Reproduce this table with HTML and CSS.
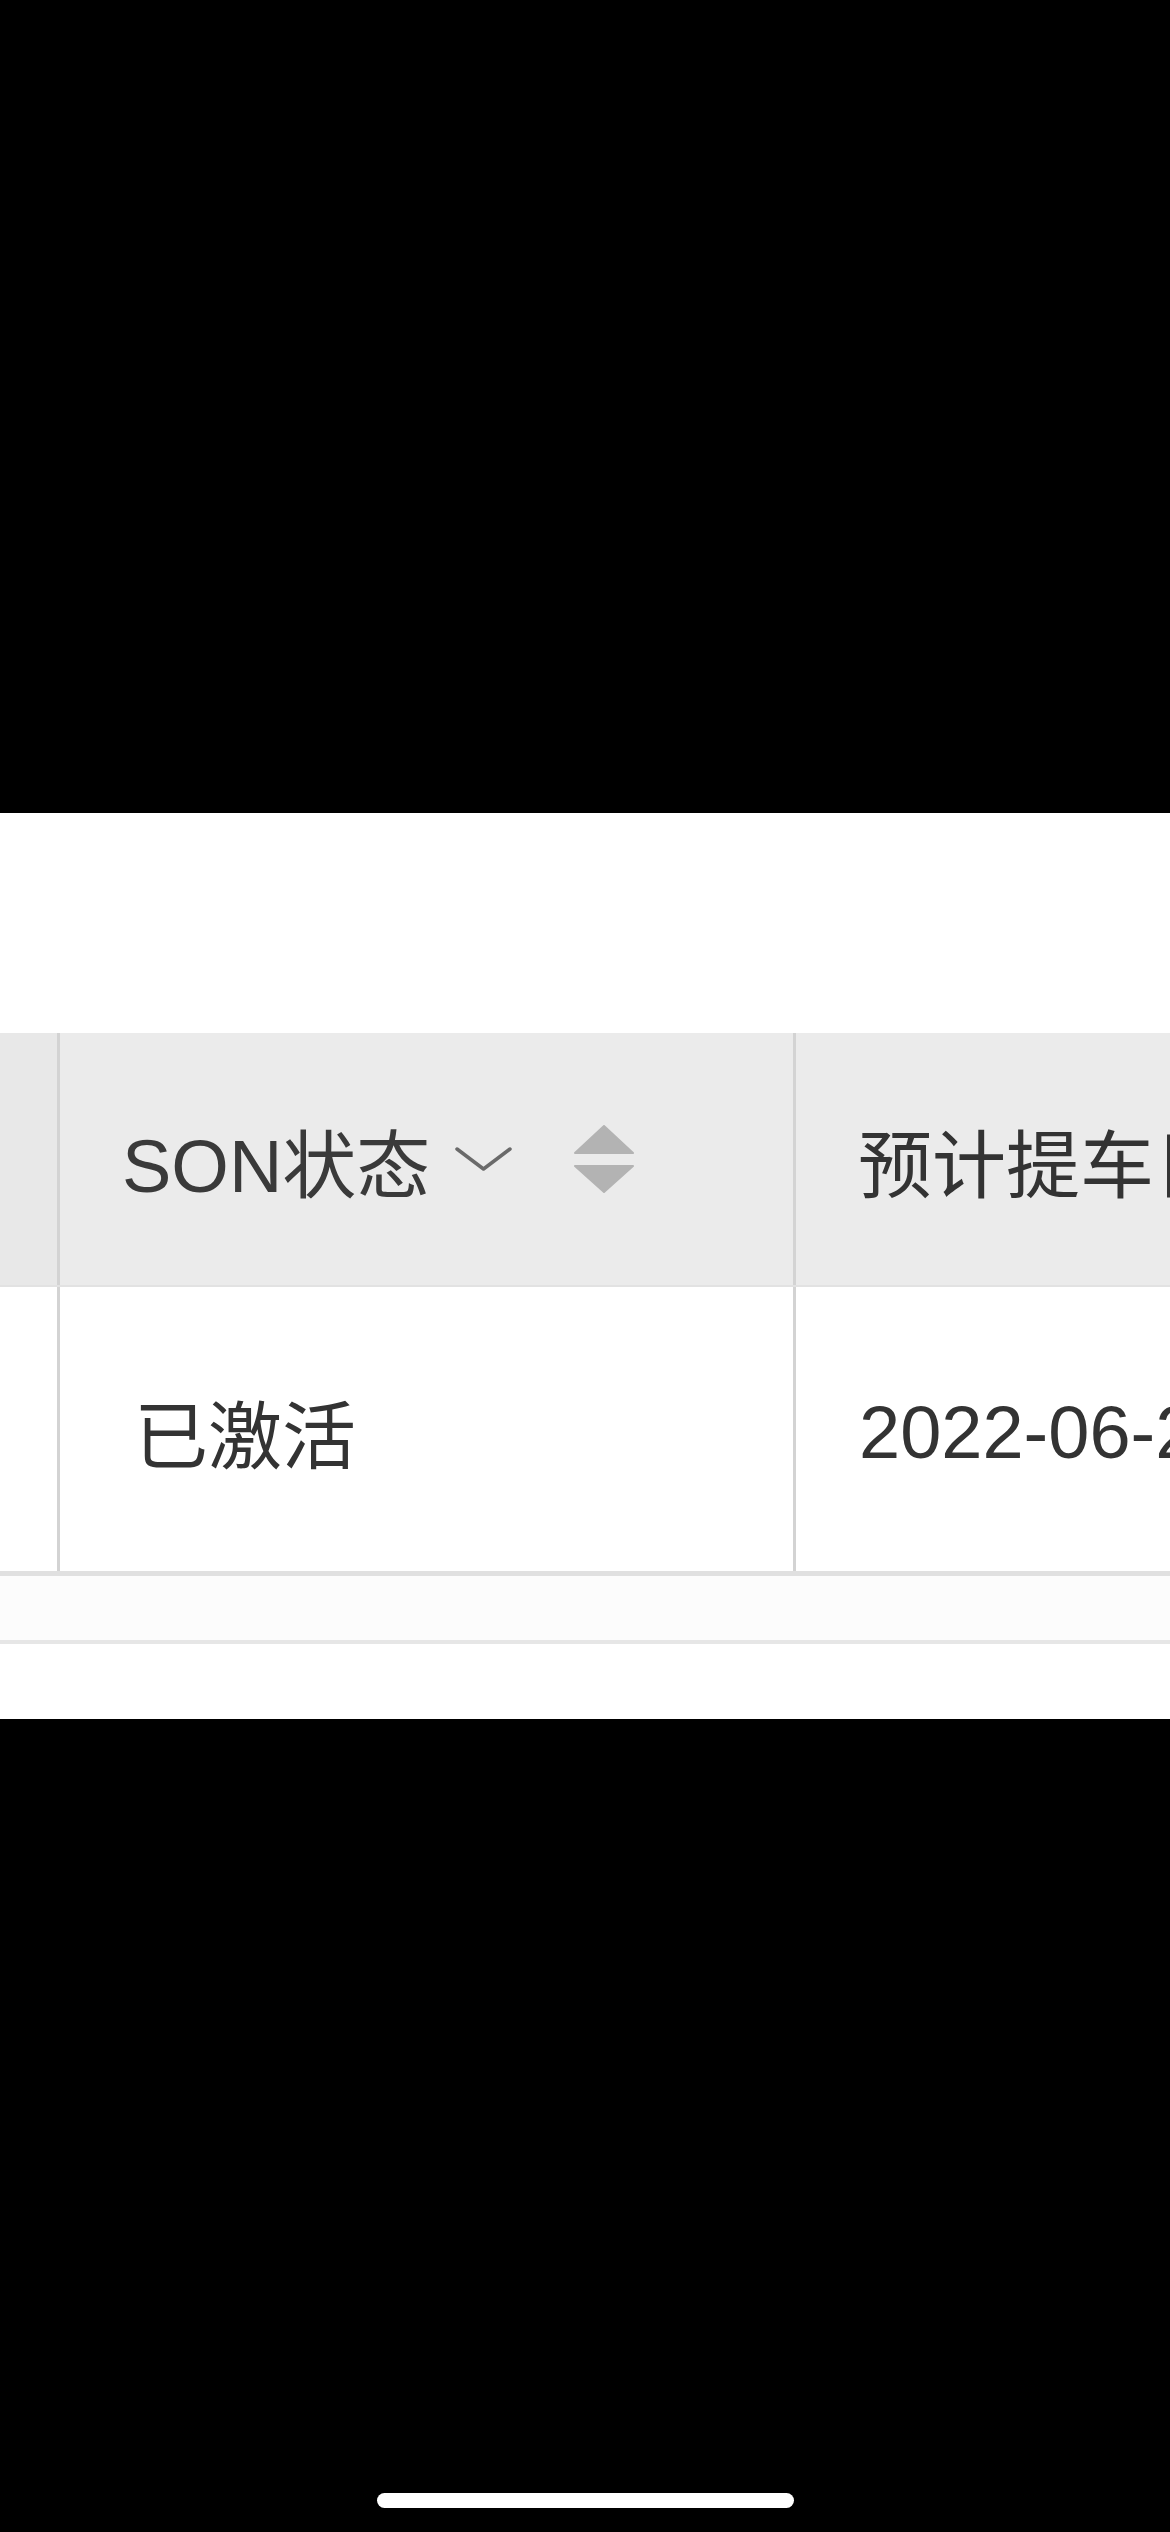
FILE: index.html
```html
<!DOCTYPE html>
<html lang="zh-CN">
<head>
<meta charset="utf-8">
<title>SON状态</title>
<link rel="stylesheet" href="styles.css">
</head>
<body>
<div class="screen">
  <div class="bezel-top"></div>
  <main class="sheet">
    <div class="table">
      <div class="row head">
        <div class="cell stub"></div>
        <div class="cell c1">
          <span class="label">SON状态</span>
          <svg class="chev" width="57" height="26" viewBox="0 0 57 26"><polyline points="2,3 28.5,23 55,3" fill="none" stroke="#6a6a6a" stroke-width="3.5" stroke-linejoin="round" stroke-linecap="round"/></svg>
          <svg class="sort" width="60" height="68" viewBox="0 0 60 68"><path d="M30 1 L59 28 L1 28 Z" fill="#b3b3b3" stroke="#b3b3b3" stroke-width="2" stroke-linejoin="round"/><path d="M1 41 L59 41 L30 67 Z" fill="#b3b3b3" stroke="#b3b3b3" stroke-width="2" stroke-linejoin="round"/></svg>
        </div>
        <div class="cell c2"><span class="label">预计提车日期</span></div>
      </div>
      <div class="row body">
        <div class="cell stub"></div>
        <div class="cell c1 status">已激活</div>
        <div class="cell c2 date">2022-06-28</div>
      </div>
    </div>
    <div class="footer-row"></div>
  </main>
  <div class="bezel-bottom"><div class="home-indicator"></div></div>
</div>
</body>
</html>
```
FILE: styles.css
```css
html, body {
  margin: 0;
  padding: 0;
  background: #000;
}
.screen {
  width: 1170px;
  height: 2532px;
  overflow: hidden;
  display: flex;
  flex-direction: column;
  font-family: "Liberation Sans", "Noto Sans CJK SC", sans-serif;
}
.bezel-top {
  height: 813px;
  background: #000;
  flex: none;
}
.sheet {
  height: 906px;
  flex: none;
  background: #fff;
  padding-top: 220px;
  box-sizing: border-box;
  overflow: hidden;
}
.table {
  display: flex;
  flex-direction: column;
}
.row {
  display: grid;
  grid-template-columns: 60px 736px 1fr;
}
.head {
  height: 254px;
  background: #ebebeb;
  border-bottom: 2px solid #e2e2e2;
  box-sizing: border-box;
}
.head .stub {
  background: #e8e8e8;
}
.body {
  height: 289px;
  background: #fff;
  border-bottom: 5px solid #e0e0e0;
  box-sizing: border-box;
}
.cell {
  display: flex;
  align-items: center;
  font-size: 74px;
  color: #333;
  white-space: nowrap;
  overflow: hidden;
  min-width: 0;
}
.stub {
  border-right: 3px solid #d3d3d3;
}
.c1 {
  border-right: 3px solid #d3d3d3;
  padding-left: 62px;
}
.c2 {
  padding-left: 62px;
}
.head .c1 .label {
  color: #3a3a3a;
}
.chev {
  margin-left: 25px;
  flex: none;
}
.sort {
  margin-left: 62px;
  flex: none;
}
.status {
  padding-left: 74px;
  padding-top: 2px;
}
.date {
  padding-left: 63px;
  padding-top: 6px;
}
.footer-row {
  height: 68px;
  background: #fcfcfc;
  border-bottom: 4px solid #e6e6e6;
  box-sizing: border-box;
}
.bezel-bottom {
  flex: 1;
  background: #000;
  display: flex;
  justify-content: center;
  align-items: flex-end;
  padding-bottom: 24px;
}
.home-indicator {
  width: 417px;
  height: 15px;
  border-radius: 8px;
  background: #fff;
}
```
